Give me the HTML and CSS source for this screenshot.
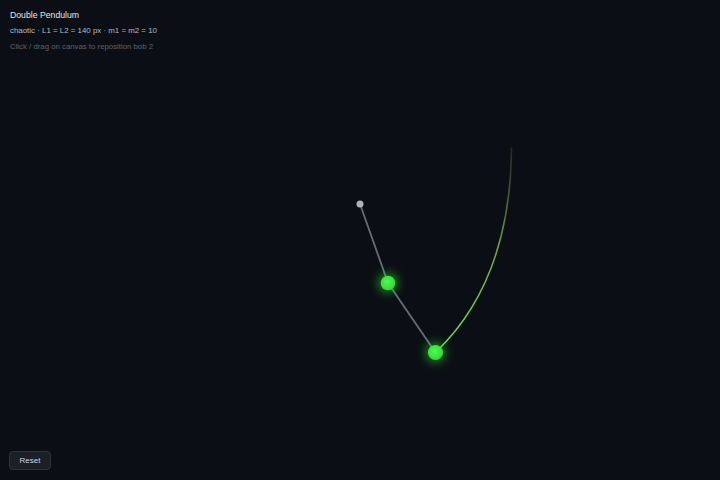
FILE: index.html
```html
<!DOCTYPE html>
<html>
<head>
<meta charset="utf-8">
<link rel="stylesheet" href="styles.css">
</head>
<body>
<div class="stage">
  <svg class="canvas" width="720" height="480" viewBox="0 0 720 480">
    <defs>
      <linearGradient id="trail" gradientUnits="userSpaceOnUse" x1="511" y1="148" x2="436" y2="352">
        <stop offset="0" stop-color="#8a9a4a" stop-opacity="0.2"/>
        <stop offset="0.45" stop-color="#8ccc4a" stop-opacity="0.8"/>
        <stop offset="1" stop-color="#66e84a" stop-opacity="1"/>
      </linearGradient>
      <radialGradient id="bob" cx="0.45" cy="0.42" r="0.6">
        <stop offset="0" stop-color="#55f755"/>
        <stop offset="1" stop-color="#30d830"/>
      </radialGradient>
      <filter id="glow" x="-200%" y="-200%" width="500%" height="500%">
        <feGaussianBlur stdDeviation="5"/>
      </filter>
    </defs>
    <path d="M511.5 148 C 511 230, 490 300, 436 352" fill="none" stroke="url(#trail)" stroke-width="1.5" stroke-linecap="round"/>
    <polyline points="360,204 388,283 435.5,352.5" fill="none" stroke="#767c88" stroke-opacity="0.85" stroke-width="1.8"/>
    <circle cx="360" cy="204" r="3.5" fill="#aeb2bb"/>
    <circle cx="388" cy="283" r="10" fill="#2ee02e" opacity="0.55" filter="url(#glow)"/>
    <circle cx="435.5" cy="352.5" r="10" fill="#2ee02e" opacity="0.55" filter="url(#glow)"/>
    <circle cx="388" cy="283" r="7.3" fill="url(#bob)"/>
    <circle cx="435.5" cy="352.5" r="7.6" fill="url(#bob)"/>
  </svg>
  <div class="info">
    <div class="title">Double Pendulum</div>
    <div class="meta">chaotic · L1 = L2 = 140 px · m1 = m2 = 10</div>
    <div class="hint">Click / drag on canvas to reposition bob 2</div>
  </div>
  <button class="reset">Reset</button>
</div>
</body>
</html>
```

FILE: styles.css
```css
html, body {
  margin: 0;
  padding: 0;
  background: #0b0f15;
  width: 720px;
  height: 480px;
  overflow: hidden;
  font-family: "Liberation Sans", Arial, sans-serif;
}
.stage {
  position: relative;
  width: 720px;
  height: 480px;
}
.canvas {
  display: block;
}
.info {
  position: absolute;
  top: 9px;
  left: 10px;
  display: flex;
  flex-direction: column;
}
.title {
  color: #e4e6ea;
  font-size: 8.7px;
  line-height: 12px;
}
.meta {
  color: #b4b8c0;
  font-size: 7.9px;
  line-height: 12px;
  margin-top: 4px;
}
.hint {
  color: #5b616c;
  font-size: 7.8px;
  line-height: 12px;
  margin-top: 4px;
}
.reset {
  position: absolute;
  left: 9px;
  top: 451px;
  width: 42px;
  height: 19px;
  padding: 0;
  background: #1b1f27;
  border: 1px solid #2d323c;
  border-radius: 4px;
  color: #d2d5dc;
  font-family: "Liberation Sans", Arial, sans-serif;
  font-size: 8px;
}
```
